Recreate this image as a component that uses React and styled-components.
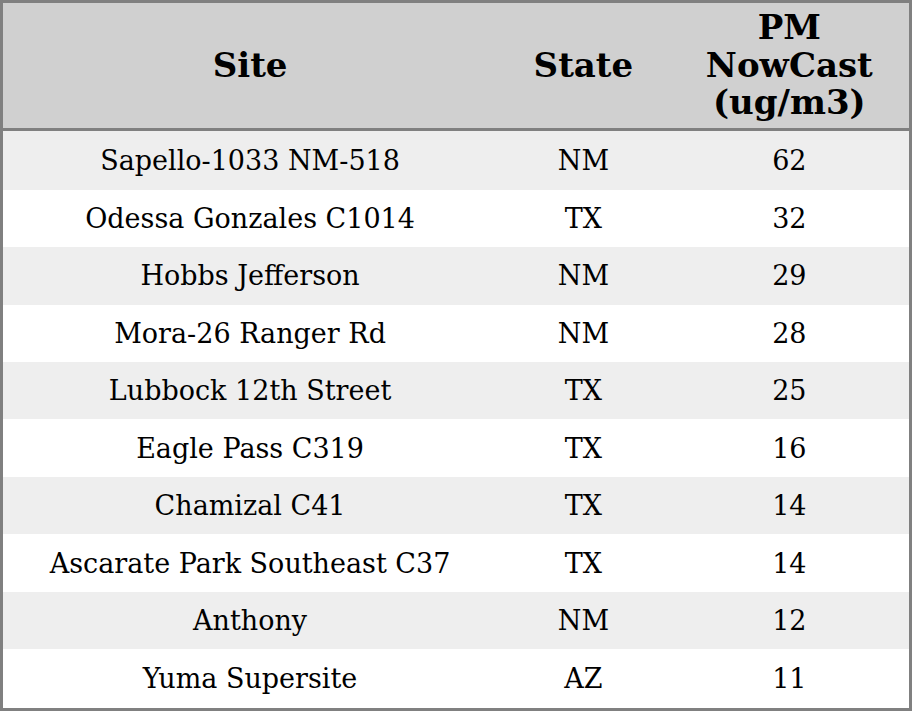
import React from 'react';
import styled, { createGlobalStyle } from 'styled-components';

const GlobalStyle = createGlobalStyle`
  html, body {
    margin: 0;
    padding: 0;
    background: #ffffff;
  }
  body {
    font-family: "DejaVu Serif", "Liberation Serif", serif;
  }
`

const StyledTable = styled.table`
  width: 912px;
  height: 711px;
  border-collapse: collapse;
  border: 3px solid #808080;
  table-layout: fixed;
  color: #000;
`

const Col = styled.col`
  width: ${props => props.$width}px;
`

const HeadCell = styled.th`
  background-color: #d0d0d0;
  font-size: 34px;
  line-height: 1.1;
  font-weight: bold;
  text-align: center;
  padding: 6px 0;
  height: 113px;
  border-bottom: 3px solid #808080;
`

const Row = styled.tr`
  background-color: ${props => (props.$striped ? '#eeeeee' : '#ffffff')};
`

const Cell = styled.td`
  font-size: 27px;
  text-align: center;
  padding: 0;
`

const rows = [
  ['Sapello-1033 NM-518', 'NM', 62],
  ['Odessa Gonzales C1014', 'TX', 32],
  ['Hobbs Jefferson', 'NM', 29],
  ['Mora-26 Ranger Rd', 'NM', 28],
  ['Lubbock 12th Street', 'TX', 25],
  ['Eagle Pass C319', 'TX', 16],
  ['Chamizal C41', 'TX', 14],
  ['Ascarate Park Southeast C37', 'TX', 14],
  ['Anthony', 'NM', 12],
  ['Yuma Supersite', 'AZ', 11],
]

export default function App() {
  return (
    <>
      <GlobalStyle />
      <StyledTable>
        <colgroup>
          <Col $width={494} />
          <Col $width={172} />
          <Col $width={240} />
        </colgroup>
        <thead>
          <tr>
            <HeadCell>Site</HeadCell>
            <HeadCell>State</HeadCell>
            <HeadCell>PM<br />NowCast<br />(ug/m3)</HeadCell>
          </tr>
        </thead>
        <tbody>
          {rows.map(([site, state, pm], i) => (
            <Row key={site} $striped={i % 2 === 0}>
              <Cell>{site}</Cell>
              <Cell>{state}</Cell>
              <Cell>{pm}</Cell>
            </Row>
          ))}
        </tbody>
      </StyledTable>
    </>
  )
}
